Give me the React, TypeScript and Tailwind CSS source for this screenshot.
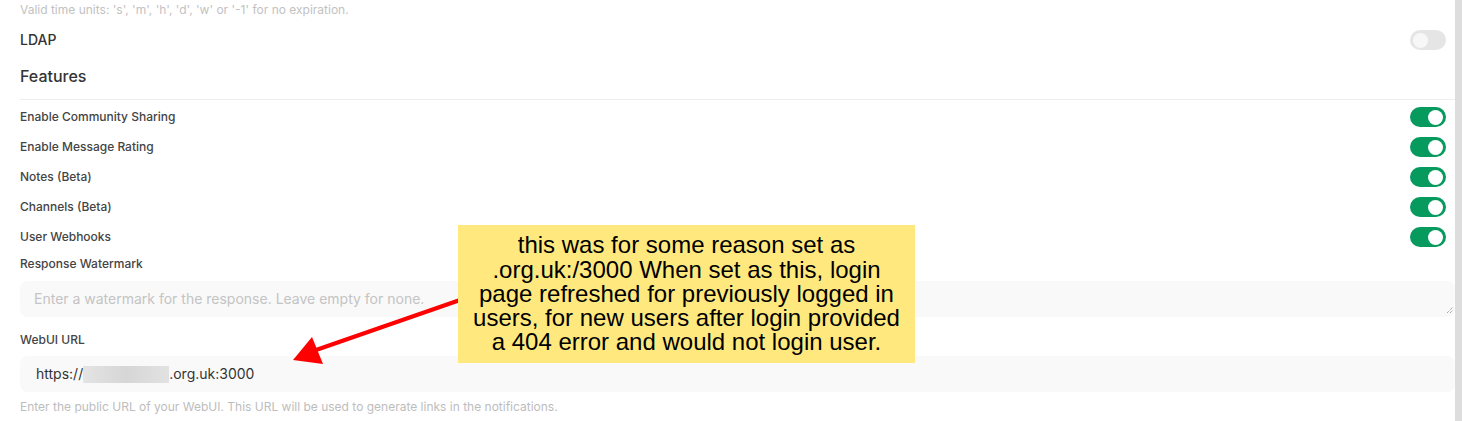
import React from 'react';

const Toggle: React.FC<{ on?: boolean }> = ({ on }) => (
  <div
    className={`mr-[9px] flex h-5 w-9 items-center rounded-full px-[3px] ${
      on ? 'justify-end bg-[#079a5e]' : 'justify-start bg-[#e5e5e5]'
    }`}
  >
    <div className={`h-[15px] w-[15px] rounded-full ${on ? 'bg-white' : 'bg-[#f7f7f7]'}`} />
  </div>
);

const features = [
  'Enable Community Sharing',
  'Enable Message Rating',
  'Notes (Beta)',
  'Channels (Beta)',
  'User Webhooks',
];

const App: React.FC = () => {
  return (
    <div className="relative flex h-[421px] w-[1462px] overflow-hidden bg-white" style={{ fontFamily: 'Inter, "Noto Sans", sans-serif' }}>
      <div className="flex-1 pl-5">
        <div className="flex h-[20px] items-center text-xs text-[#c2c2c2]">
          Valid time units: 's', 'm', 'h', 'd', 'w' or '-1' for no expiration.
        </div>
        <div className="flex h-[40px] items-center justify-between text-sm font-medium text-[#333]">
          <span>LDAP</span>
          <Toggle />
        </div>
        <div className="mb-[7px] flex h-[32px] items-center text-base font-medium text-[#333]">Features</div>
        <div className="h-px bg-[#eeeeee]" />
        <div className="pt-[2px]">
          {features.map((f) => (
            <div key={f} className="flex h-[30px] items-center justify-between text-xs font-medium text-[#444]">
              <span>{f}</span>
              <Toggle on />
            </div>
          ))}
        </div>
        <div className="flex h-[24px] items-center text-xs font-medium text-[#444]">Response Watermark</div>
        <div className="relative mt-[5px] h-[36px] rounded-lg bg-[#f9f9f9] px-[14px]">
          <div className="flex h-full items-center text-sm text-[#c4c4c4]">Enter a watermark for the response. Leave empty for none.</div>
          <svg className="absolute bottom-[3px] right-[1px]" width="8" height="8" viewBox="0 0 8 8">
            <path d="M1 7 L7 1 M4 7 L7 4" stroke="#888" strokeWidth="1" strokeDasharray="1 1" />
          </svg>
        </div>
        <div className="flex h-[39px] items-center pt-[6px] text-xs font-medium text-[#444]">WebUI URL</div>
        <div className="flex h-[36px] items-center rounded-lg bg-[#f9f9f9] px-4 text-sm text-[#333]">
          <span>https://</span>
          <span className="h-[17px] w-[86px] bg-gradient-to-r from-[#e4e4e4] via-[#d6d6d6] to-[#e2e2e2]" />
          <span>.org.uk:3000</span>
        </div>
        <div className="flex h-[30px] items-center text-xs text-[#bdbdbd]">
          Enter the public URL of your WebUI. This URL will be used to generate links in the notifications.
        </div>
      </div>
      <div className="h-full w-[7px] bg-[#dddddd]" />

      <svg className="pointer-events-none absolute left-0 top-0" width="1462" height="421">
        <line x1="460" y1="300" x2="316" y2="350" stroke="#ff0000" strokeWidth="4" />
        <polygon points="293,360 312,337 323,364" fill="#ff0000" />
      </svg>
      <div
        className="absolute left-[458px] top-[225px] flex h-[138px] w-[457px] items-center justify-center bg-[#ffe97e] text-center text-[24px] leading-[24.3px] text-black"
        style={{ fontFamily: '"Liberation Sans", Arial, sans-serif' }}
      >
        <div>
          this was for some reason set as
          <br />
          .org.uk:/3000 When set as this, login
          <br />
          page refreshed for previously logged in
          <br />
          users, for new users after login provided
          <br />
          a 404 error and would not login user.
        </div>
      </div>
    </div>
  );
};

export default App;
